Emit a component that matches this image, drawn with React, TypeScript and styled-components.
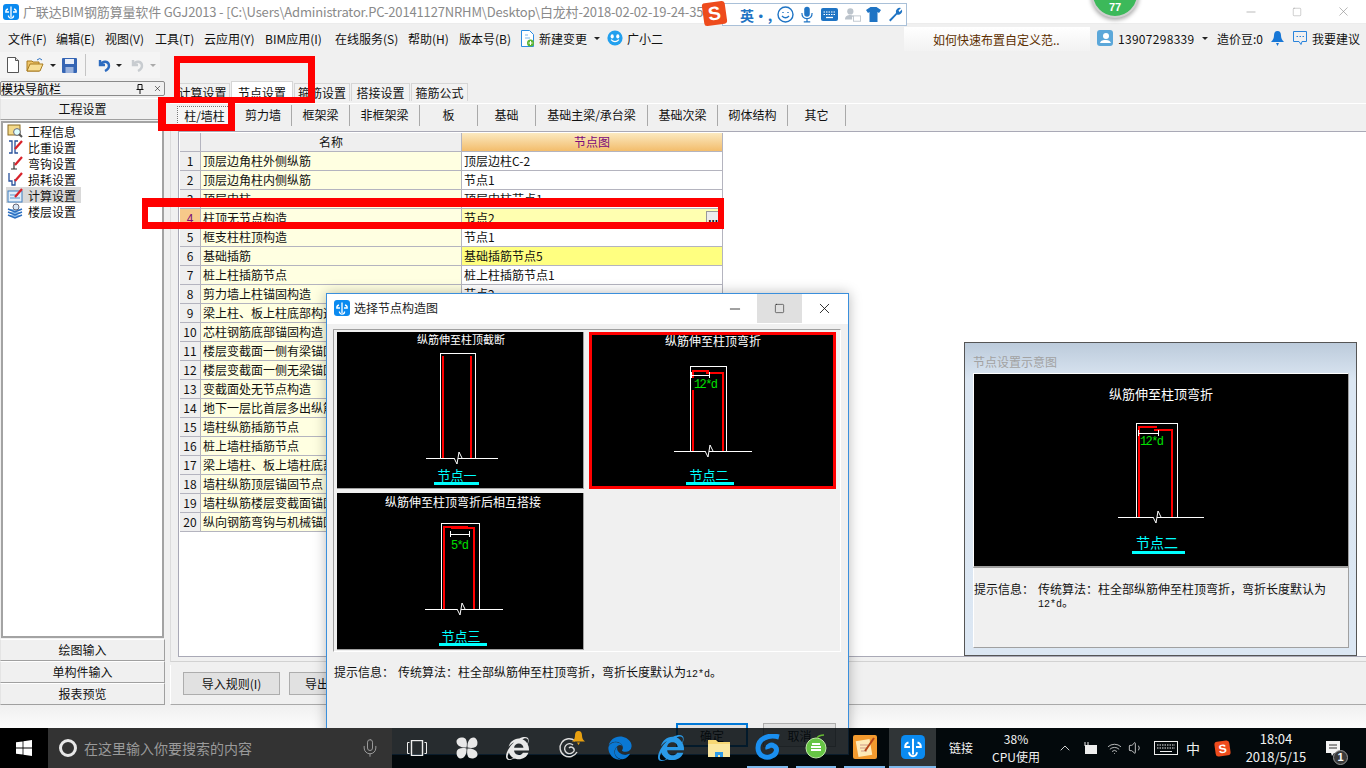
import React from "react";
import styled, { createGlobalStyle } from "styled-components";
import { FaEdge, FaInternetExplorer } from "react-icons/fa";
import { ChevronUp, Mic, Volume1, Wifi, X, Minus, Square } from "lucide-react";

const Global = createGlobalStyle`
  html, body { margin: 0; padding: 0; background: #000; }
  * { box-sizing: border-box; }
  body { font-family: "Noto Sans CJK SC", "Liberation Sans", sans-serif; font-size: 12px; color: #000; }
`;

const Desktop = styled.div`
  position: relative; width: 1366px; height: 768px; overflow: hidden;
  display: flex; flex-direction: column; background: #03090d;
`;
const AppWindow = styled.div`display: flex; flex-direction: column; height: 728px; background: #f0f0f0;`;

const TitleBar = styled.div`
  height: 23px; flex: none; background: #fff; display: flex; align-items: center; padding-left: 3px; gap: 4px;
`;
const TitleText = styled.span`font-size: 13px; color: #8a8a8a; white-space: nowrap; padding-bottom: 1px; letter-spacing: -0.16px;`;
const WinControls = styled.div`margin-left: auto; display: flex; color: #8c8c8c;`;
const WinButton = styled.span`width: 46px; height: 23px; display: flex; align-items: center; justify-content: center;`;

const MenuBar = styled.div`height: 29px; flex: none; display: flex; align-items: center; padding-left: 8px; border-top: 1px solid #ececec;`;
const MenuItem = styled.span<{ $w: number }>`width: ${p => p.$w}px; flex: none; white-space: nowrap; color: #111;`;
const MenuAction = styled.span`display: flex; align-items: center; gap: 4px; color: #111; white-space: nowrap;`;
const Caret = styled.i<{ $light?: boolean; $gap?: number }>`
  width: 0; height: 0; flex: none; margin: 0 ${p => p.$gap ?? 0}px;
  border-left: 3px solid transparent; border-right: 3px solid transparent;
  border-top: 3px solid ${p => (p.$light ? "#aaa" : "#222")};
`;
const NewsBox = styled.div`
  position: absolute; left: 904px; top: 27px; width: 186px; height: 24px; padding-left: 29px;
  display: flex; align-items: center; color: #5c2f00; background: linear-gradient(#fff, #f2f2f2);
`;
const UserArea = styled.div`
  margin-left: auto; padding-right: 6px; display: flex; align-items: center; color: #111; white-space: nowrap;
`;
const UserSlot = styled.span<{ $w: number; $wide?: boolean }>`
  width: ${p => p.$w}px; display: flex; align-items: center; flex: none;
  ${p => p.$wide && "letter-spacing: 0.3px;"}
`;

const ToolBar = styled.div`height: 29px; flex: none; display: flex; align-items: flex-start;`;
const ToolGroup = styled.div`
  height: 26px; width: 160px; padding-left: 3px; display: flex; align-items: center; background: #f4f4f4;
`;
const ToolSlot = styled.span<{ $w: number }>`width: ${p => p.$w}px; flex: none; display: flex; justify-content: center;`;
const ToolSep = styled.i`width: 1px; height: 22px; background: #c4c4c4; margin: 0 7px 0 6px; flex: none;`;

const Workspace = styled.div`height: 624px; flex: none; display: flex;`;
const Nav = styled.div`width: 165px; flex: none; margin-right: 5px; display: flex; flex-direction: column;`;
const NavHead = styled.div`
  height: 15px; flex: none; display: flex; align-items: center; border: 1px solid #8a8a8a; border-radius: 2px;
  line-height: 13px; white-space: nowrap;
`;
const NavHeadIcons = styled.span`margin-left: auto; display: flex; align-items: center; gap: 9px; padding-right: 2px;`;
const NavButton = styled.div<{ $h?: number }>`
  height: ${p => p.$h ?? 22}px; flex: none; display: flex; align-items: center; justify-content: center;
  background: #f0f0f0; border: 1px solid #a0a0a0; border-top-color: #fff; border-left-color: #e4e4e4;
  margin-top: ${p => (p.$h ? 2 : 0)}px; color: #111; padding-bottom: 2px;
`;
const Tree = styled.div`
  flex: 1; margin: 1px 1px 1px; background: #fff; border: 2px solid #a3a3a3; padding: 0 3px; display: flex; flex-direction: column;
`;
const TreeRow = styled.div<{ $on?: boolean }>`
  height: 16px; width: 75px; display: flex; align-items: center; gap: 4px; padding-left: 1px; white-space: nowrap;
  background: ${p => (p.$on ? "#d9d9d9" : "transparent")}; color: #111;
`;

const Right = styled.div`flex: 1; min-width: 0; display: flex; flex-direction: column;`;
const Tabs = styled.div`height: 20px; flex: none; display: flex; padding-left: 5px; gap: 1px; align-items: flex-end;`;
const Tab = styled.div<{ $w: number; $on?: boolean }>`
  width: ${p => p.$w}px; height: ${p => (p.$on ? 20 : 18)}px; display: flex; align-items: center; justify-content: center;
  background: ${p => (p.$on ? "#fff" : "#f2f2f2")}; border: 1px solid #d6d6d6; border-bottom: none; color: #111;
  padding-bottom: ${p => (p.$on ? 0 : 1)}px; padding-top: ${p => (p.$on ? 2 : 0)}px;
`;
const SubTabs = styled.div`
  height: 24px; flex: none; margin-top: 2px; padding-left: 7px; display: flex; align-items: center; border-top: 1px solid #fff;
`;
const SubTab = styled.div<{ $w: number; $on?: boolean }>`
  width: ${p => p.$w}px; height: 21px; flex: none; display: flex; align-items: center; justify-content: center; color: #111;
  border-right: 1px solid #a9a9a9; padding-bottom: 2px;
  ${p => p.$on && "border: 1px dotted #777; background: #f7f7f7; height: 19px; margin-right: 3px; padding-bottom: 0;"}
`;
const GridOuter = styled.div`
  margin-top: 4px; height: 531px; flex: none; padding-left: 7px; border-left: 1px solid #dcdcdc; border-bottom: 1px solid #d2d2d2;
`;
const GridFrame = styled.div`
  height: 526px; background: #fff; border: 1px solid #a9a9b6; border-right: none; padding: 1px;
`;
const Row = styled.div`display: grid; grid-template-columns: 21px 261px 261px; width: 543px; height: 19px;`;
const Cell = styled.div<{ $bg?: string; $center?: boolean; $color?: string }>`
  background: ${p => p.$bg ?? "#fff"}; color: ${p => p.$color ?? "#111"};
  border-right: 1px solid #b4b4bf; border-bottom: 1px solid #b4b4bf; padding: 0 0 2px ${p => (p.$center ? 0 : 2)}px;
  display: flex; align-items: center; white-space: nowrap; overflow: hidden; position: relative;
  ${p => p.$center && "justify-content: center;"}
`;
const DotButton = styled.span`
  position: absolute; right: 2px; top: 2px; width: 14px; height: 14px; background: #ececec; border: 1px solid #999;
  color: #000; font-size: 10px; font-weight: 700; display: flex; align-items: center; justify-content: center; line-height: 6px;
`;
const BottomBar = styled.div`
  height: 40px; flex: none; margin-top: 3px; padding: 7px 0 0 12px; display: flex; gap: 9px;
  border-left: 1px solid #fff; border-bottom: 1px solid #a9a9a9;
`;
const GrayButton = styled.div<{ $w: number; $start?: boolean }>`
  width: ${p => p.$w}px; height: 23px; display: flex; align-items: center; justify-content: ${p => (p.$start ? "flex-start" : "center")};
  padding: 0 0 1px ${p => (p.$start ? 15 : 0)}px;
  background: #e1e1e1; border: 1px solid #adadad; color: #111;
`;
const FootStrip = styled.div`flex: 1; background: linear-gradient(#f0f0f0, #fcfcfc);`;

const Ring = styled.div`
  position: absolute; left: 1091px; top: -30px; width: 48px; height: 48px; border-radius: 50%; z-index: 8;
  background: #3cb95a; border: 2px solid #cfcfcf; box-shadow: 0 2px 4px rgba(0,0,0,.35);
  display: flex; align-items: flex-end; justify-content: center; padding-bottom: 3px;
  color: #fff; font-family: "Liberation Sans", sans-serif; font-weight: 700; font-size: 11px;
`;
const Ime = styled.div`
  position: absolute; left: 722px; top: 3px; width: 185px; height: 23px; background: #fff; border: 1px solid #a9c0d8; z-index: 9;
  display: flex; align-items: center; padding-left: 14px; color: #1f74c4;
`;
const ImeSlot = styled.span<{ $w: number }>`width: ${p => p.$w}px; flex: none; display: flex; justify-content: center; font-weight: 700; font-size: 14px;`;
const SogouBadge = styled.div<{ $size: number }>`
  width: ${p => p.$size}px; height: ${p => p.$size}px; border-radius: 3px; background: #ee4b1c; transform: rotate(-8deg);
  display: flex; align-items: center; justify-content: center; color: #fff; flex: none;
  font: 700 ${p => Math.round(p.$size * 0.82)}px "Liberation Sans", sans-serif;
`;
const ImeLogo = styled.div`position: absolute; left: 703px; top: 2px; z-index: 10;`;

const Red = styled.div<{ $l: number; $t: number; $w: number; $h: number; $b: string }>`
  position: absolute; left: ${p => p.$l}px; top: ${p => p.$t}px; width: ${p => p.$w}px; height: ${p => p.$h}px;
  border: solid #ff0000; border-width: ${p => p.$b}; z-index: 3; pointer-events: none;
`;

const Dialog = styled.div`
  position: absolute; left: 326px; top: 293px; width: 523px; height: 462px; background: #f0f0f0; z-index: 5;
  border: 1px solid #3a8fdc; box-shadow: 0 0 12px rgba(0,0,0,.28); display: flex; flex-direction: column;
`;
const DialogTitle = styled.div`
  height: 30px; flex: none; background: #fff; display: flex; align-items: center; padding: 0 0 3px 7px; gap: 4px; color: #222;
`;
const DialogControls = styled.div`margin-left: auto; margin-right: 1px; display: flex; height: 29px; align-self: flex-start; color: #111;`;
const DialogBtn = styled.span<{ $hover?: boolean }>`
  width: 45px; display: flex; align-items: center; justify-content: center; background: ${p => (p.$hover ? "#e0e0e0" : "transparent")};
`;
const PickFrame = styled.div`
  margin: 5px 0 0 6px; width: 508px; height: 323px; flex: none; border: 1px solid #a0a0a0; border-right-color: #fff; border-bottom-color: #fff;
  padding: 2px 3px; display: grid; grid-template-columns: 247px 247px; grid-auto-rows: 157px; column-gap: 5px; row-gap: 4px;
`;
const Pick = styled.div<{ $on?: boolean }>`
  background: #000; border-right: 1px solid #a0a0a0; border-bottom: 1px solid #a0a0a0;
  ${p => p.$on && "outline: 3px solid #f00; outline-offset: -3px;"}
  svg { display: block; }
`;
const TipLine = styled.div`margin: 11px 0 0 7px; white-space: nowrap; color: #111; display: flex; gap: 4px;`;
const Mono = styled.span`font-family: "Liberation Mono", monospace; font-size: 10px; white-space: nowrap; display: inline-block;`;
const DialogFoot = styled.div`margin-top: auto; margin-bottom: 7px; padding-left: 349px; display: flex; gap: 15px;`;
const DialogButton = styled.div<{ $primary?: boolean }>`
  width: ${p => (p.$primary ? 72 : 73)}px; height: 24px; display: flex; align-items: center; justify-content: center; color: #111;
  background: #e1e1e1; border: ${p => (p.$primary ? "2px solid #0078d7" : "1px solid #adadad")};
`;

const Preview = styled.div`
  position: absolute; left: 964px; top: 342px; width: 393px; height: 314px; z-index: 4; border: 1px solid #555;
  background: linear-gradient(#bccbdb, #dbe6f2 12%, #dce7f3); padding: 0 7px 7px 8px; display: flex; flex-direction: column;
`;
const PreviewTitle = styled.div`height: 30px; flex: none; display: flex; align-items: center; padding-top: 6px; color: #a2a2a2;`;
const PreviewArt = styled.div`
  height: 195px; flex: none; background: #000; border: 1px solid #fff; border-right-color: #a0a0a0; border-bottom: 2px solid #a0a0a0; overflow: hidden;
  svg { display: block; margin: -1px; }
`;
const PreviewTip = styled.div`
  flex: 1; background: #f0f0f0; padding: 14px 0 0 0; border: 1px solid #fff; border-top: none; border-right-color: #a0a0a0; border-bottom-color: #a0a0a0;
  display: flex; gap: 4px; line-height: 13px; color: #111;
`;
const PreviewText = styled.div`width: 294px;`;

const Taskbar = styled.div`
  position: relative; z-index: 7; height: 40px; flex: none; display: flex; align-items: stretch; color: #fff;
  background: rgba(3, 9, 13, 0.85);
`;
const Start = styled.div`width: 48px; flex: none; background: #000; display: flex; align-items: center; justify-content: center;`;
const Search = styled.div`
  width: 344px; flex: none; background: #333; display: flex; align-items: center; padding-left: 11px; color: #9a9a9a; font-size: 14px; gap: 7px;
`;
const Cortana = styled.i`width: 18px; height: 18px; border-radius: 50%; border: 3px solid #e8e8e8; flex: none;`;
const SearchMic = styled.span`margin-left: auto; margin-right: 12px; display: flex;`;
const TaskIcons = styled.div`
  width: 544px; flex: none; display: grid; grid-template-columns: 49px 51px 51px 51px 52px 49px 48px 49px 48px 49px 47px;
`;
const TaskSlot = styled.div<{ $active?: boolean; $under?: boolean }>`
  position: relative; display: flex; align-items: center; justify-content: center;
  background: ${p => (p.$active ? "rgba(255,255,255,.18)" : "transparent")};
  ${p => p.$under && `border-bottom: 2px solid #7db8ec; margin: 0 ${p.$active ? 0 : 4}px;`}
`;
const TrayText = styled.div<{ $w: number; $fs?: number }>`
  width: ${p => p.$w}px; flex: none; display: flex; flex-direction: column; align-items: center; justify-content: center;
  color: #f2f2f2; font-size: ${p => p.$fs ?? 12}px; line-height: 18px; white-space: nowrap;
`;
const TraySlot = styled.div<{ $w: number }>`width: ${p => p.$w}px; flex: none; display: flex; align-items: center; justify-content: center; color: #eee; font-size: 14px;`;
const TrayGap = styled.i`width: 7px; flex: none;`;
const NotifyBadge = styled.span`
  position: absolute; right: -8px; bottom: -9px; width: 15px; height: 15px; border-radius: 50%; background: #3a3a3a; border: 1px solid #999;
  display: flex; align-items: center; justify-content: center; font: 700 11px "Liberation Sans", sans-serif; color: #fff;
`;
const NotifyWrap = styled.span`position: relative; display: flex;`;
const BellOver = styled.span`position: absolute; right: 9px; top: 3px; display: flex;`;

const Logo = ({ size = 16 }: { size?: number }) => (
  <svg width={size} height={size} viewBox="0 0 16 16">
    <rect width="16" height="16" rx="3" fill="#0a8af0" />
    <path d="M8 2.500v10.500M5 5a3 3 0 0 0-2.200 3H6M11 5a3 3 0 0 1 2.200 3H10M5.400 11.500A2.600 2.600 0 0 0 10.600 11.500" stroke="#fff" strokeWidth="1.300" fill="none" />
  </svg>
);
const Pencil = () => <path d="M8 10 15 2" stroke="#d8222a" strokeWidth="2.200" />;
const TreeIcon = ({ kind }: { kind: number }) => (
  <svg width="17" height="16" viewBox="0 0 17 16">
    {kind === 0 && (<g><rect x="1" y="2" width="12" height="10" fill="#f3d98a" stroke="#8a6a20" /><circle cx="10" cy="9" r="3.400" fill="#dff" stroke="#667" /><path d="m12 11 3 3" stroke="#555" strokeWidth="2" /></g>)}
    {kind === 1 && (<g><path d="M2 2h3v12H2M11 2H8v12h3" stroke="#27509b" strokeWidth="1.300" fill="none" /><Pencil /></g>)}
    {kind === 2 && (<g><path d="M7 7v7M4 14h6" stroke="#333" strokeWidth="1.200" /><Pencil /></g>)}
    {kind === 3 && (<g><path d="M2 2v8h3v4h3v-6" stroke="#27509b" strokeWidth="1.300" fill="none" /><Pencil /></g>)}
    {kind === 4 && (<g><rect x="1" y="4" width="14" height="11" fill="#e1eefa" stroke="#3f7fbf" /><path d="M3 8h8M3 11h10" stroke="#5d93c8" /><Pencil /></g>)}
    {kind === 5 && (<g><path d="M1 12 8 15l7-3M1 9l7 3 7-3M1 6l7 3 7-3" stroke="#2c6fc0" strokeWidth="1.400" fill="#8fc0ee" /><circle cx="9" cy="4" r="3" fill="#d9e8f6" stroke="#667" /></g>)}
  </svg>
);

interface Art {
  w: number; h: number; title: string; tx: number; ty: number; ts: number;
  rect: [number, number, number, number]; ground: [number, number]; red: string[]; rw: number;
  dim?: [number, number, number]; note?: [string, number, number]; brk: number;
  label: string; lx: number; ly: number; ls: number; bar: [number, number, number];
}
const NodeArt = ({ a }: { a: Art }) => {
  const gy = a.rect[3];
  return (
    <svg width={a.w} height={a.h} viewBox={`0 0 ${a.w} ${a.h}`}>
      <text x={a.tx} y={a.ty} fill="#fff" fontSize={a.ts} textAnchor="middle" fontFamily='"Noto Sans CJK SC", sans-serif'>{a.title}</text>
      <path d={`M${a.rect[0]} ${gy}V${a.rect[1]}H${a.rect[2]}V${gy}`} stroke="#fff" fill="none" shapeRendering="crispEdges" />
      {a.red.map((d, i) => <path key={i} d={d} stroke="#f00" strokeWidth={a.rw} fill="none" shapeRendering="crispEdges" />)}
      <path d={`M${a.ground[0]} ${gy}H${a.ground[1]}`} stroke="#fff" shapeRendering="crispEdges" />
      <path d={`M${a.brk - 4} ${gy}l3 6 2-12 3 6`} stroke="#fff" fill="#000" />
      {a.dim && <path d={`M${a.dim[0]} ${a.dim[2]}H${a.dim[1]}M${a.dim[0]} ${a.dim[2] - 3}v6M${a.dim[1]} ${a.dim[2] - 3}v6`} stroke="#fff" shapeRendering="crispEdges" />}
      {a.note && <text x={a.note[1]} y={a.note[2]} fill="#00e000" fontSize="12" fontFamily='"Liberation Mono", monospace' textLength={a.note[0].length * 6}>{a.note[0]}</text>}
      <text x={a.lx} y={a.ly} fill="#00ffff" fontSize={a.ls} textAnchor="middle" fontFamily='"Noto Sans CJK SC", sans-serif'>{a.label}</text>
      <rect x={a.bar[0]} y={a.bar[2]} width={a.bar[1] - a.bar[0]} height="3" fill="#00ffff" />
    </svg>
  );
};

const art1: Art = { w: 247, h: 157, title: "纵筋伸至柱顶截断", tx: 124, ty: 12, ts: 11, rect: [103, 21, 138, 126], ground: [89, 161], red: ["M106 24V126", "M134 24V126"], rw: 2, brk: 121, label: "节点一", lx: 120, ly: 148, ls: 13, bar: [97, 142, 150] };
const art2: Art = { w: 247, h: 157, title: "纵筋伸至柱顶弯折", tx: 124, ty: 14, ts: 12, rect: [101, 34, 137, 119], ground: [85, 163], red: ["M104 46V39H120", "M104 58V119", "M117 41H134V119"], rw: 2, dim: [102, 120, 43], note: ["12*d", 105, 56], brk: 120, label: "节点二", lx: 120, ly: 148, ls: 13, bar: [97, 145, 150] };
const art3: Art = { w: 247, h: 157, title: "纵筋伸至柱顶弯折后相互搭接", tx: 126, ty: 14, ts: 12, rect: [104, 30, 142, 116], ground: [88, 166], red: ["M107 116V34H131", "M114 35H137V116"], rw: 2, dim: [113, 132, 41], note: ["5*d", 114, 56], brk: 124, label: "节点三", lx: 124, ly: 148, ls: 13, bar: [102, 150, 150] };
const artBig: Art = { w: 375, h: 195, title: "纵筋伸至柱顶弯折", tx: 188, ty: 26, ts: 13, rect: [163, 50, 204, 144], ground: [145, 231], red: ["M166 144V54H184", "M181 57H199V144"], rw: 2, dim: [165, 185, 60], note: ["12*d", 167, 72], brk: 184, label: "节点二", lx: 184, ly: 175, ls: 14, bar: [159, 212, 178] };

const rows: [string, string][] = [
  ["顶层边角柱外侧纵筋", "顶层边柱C-2"], ["顶层边角柱内侧纵筋", "节点1"], ["顶层中柱", "顶层中柱节点1"],
  ["柱顶无节点构造", "节点2"], ["框支柱柱顶构造", "节点1"], ["基础插筋", "基础插筋节点5"], ["桩上柱插筋节点", "桩上柱插筋节点1"],
  ["剪力墙上柱锚固构造", "节点2"], ["梁上柱、板上柱底部构造", ""], ["芯柱钢筋底部锚固构造", ""],
  ["楼层变截面一侧有梁锚固构造", ""], ["楼层变截面一侧无梁锚固构造", ""], ["变截面处无节点构造", ""],
  ["地下一层比首层多出纵筋", ""], ["墙柱纵筋插筋节点", ""], ["桩上墙柱插筋节点", ""],
  ["梁上墙柱、板上墙柱底部构造", ""], ["墙柱纵筋顶层锚固节点", ""], ["墙柱纵筋楼层变截面锚固", ""], ["纵向钢筋弯钩与机械锚固", ""],
];
const menus: [string, number][] = [["文件(F)", 48], ["编辑(E)", 49], ["视图(V)", 50], ["工具(T)", 49], ["云应用(Y)", 61], ["BIM应用(I)", 70], ["在线服务(S)", 73], ["帮助(H)", 51], ["版本号(B)", 61]];
const tabs: [string, number, boolean?][] = [["计算设置", 55], ["节点设置", 62, true], ["箍筋设置", 56], ["搭接设置", 59], ["箍筋公式", 57]];
const subs: [string, number, boolean?][] = [["柱/墙柱", 55, true], ["剪力墙", 57], ["框架梁", 58], ["非框架梁", 70], ["板", 58], ["基础", 58], ["基础主梁/承台梁", 112], ["基础次梁", 70], ["砌体结构", 70], ["其它", 58]];
const tree = ["工程信息", "比重设置", "弯钩设置", "损耗设置", "计算设置", "楼层设置"];

const WinLogo = () => <svg width="16" height="16" viewBox="0 0 16 16" fill="#fff"><path d="M0 2.300 6.600 1.400v6.200H0zM7.400 1.300 16 0v7.600H7.400zM0 8.400h6.600v6.200L0 13.700zM7.400 8.400H16V16l-8.600-1.300z" /></svg>;
const FanIcon = () => (
  <svg width="24" height="24" viewBox="0 0 24 24" fill="#e8e8e8">
    {[0, 90, 180, 270].map(r => <path key={r} transform={`rotate(${r} 12 12)`} d="M11.500 11.500C6 12 1.500 9.500 1.500 5.500 1.500 1.500 9 0 11 3.500c1.200 2.500 1 5.500.5 8z" />)}
  </svg>
);
const FolderIcon = () => <svg width="24" height="22" viewBox="0 0 24 22"><path d="M1 3h8l2 2h12v15H1z" fill="#f7d774" /><rect x="1" y="7" width="22" height="13" fill="#fbe7a0" /><path d="M8 20v-5h8v5h-3v-2h-2v2z" fill="#2f9be8" /></svg>;
const SwirlIcon = () => <svg width="26" height="26" viewBox="0 0 26 26"><path d="M24 3C13 0 3 5 3 14c0 8 8 11 14 8 5-2 6-8 2-10-3-2-7 0-6 3" stroke="#1a8ff0" strokeWidth="5" fill="none" /></svg>;
const GreenE = () => <svg width="22" height="26" viewBox="0 0 22 26"><circle cx="11" cy="14" r="10" fill="#66c545" stroke="#bfe8a8" /><path d="M6 13h10M6 16h10M7 10h8" stroke="#fff" strokeWidth="2" /><path d="M12 4c2-3 5-3 7-3" stroke="#6b3" strokeWidth="1.400" fill="none" /></svg>;
const NoteIcon = () => <svg width="26" height="26" viewBox="0 0 26 26"><rect x="1" y="1" width="24" height="24" rx="2" fill="#f29a2e" /><rect x="5" y="6" width="14" height="16" fill="#fde9b8" transform="rotate(-10 12 14)" /><path d="M8 11h8M8 14h8M9 17h6" stroke="#c98" /><path d="M13 17 22 4" stroke="#b5461a" strokeWidth="2" /></svg>;
const SpiralIcon = () => <svg width="24" height="24" viewBox="0 0 24 24"><path d="M18 5A9 9 0 1 0 20 16M16 9a5 5 0 1 0 1 6 3 3 0 0 0-5-3" stroke="#ddd" strokeWidth="1.400" fill="none" /></svg>;
const BellGold = () => <svg width="13" height="14" viewBox="0 0 13 14" fill="#e8a010"><path d="M6.500 0C4 0 3 2 3 4.500S2 9 0 10.500h13C11 9 10 7 10 4.500S9 0 6.500 0zM5 11.500h3L6.500 14z" /></svg>;
const BlueBell = () => <svg width="13" height="15" viewBox="0 0 13 15" fill="#1877d6"><path d="M6.500 0C4 0 3 2 3 4.500S2 9 0 11h13C11 9 10 7 10 4.500S9 0 6.500 0zM5 12h3L6.500 15z" /></svg>;
const ChatIcon = () => <svg width="16" height="16" viewBox="0 0 16 16" fill="none" stroke="#2a84dc"><path d="M1.500 1.500h13v10H10l-1 3-2-3H1.500z" /><path d="M4.500 6.500h1.500M7.500 6.500H9M10.500 6.500H12" /></svg>;
const UserIcon = () => <svg width="16" height="16" viewBox="0 0 16 16"><rect width="16" height="16" rx="3" fill="#5ba7d9" /><circle cx="9" cy="6" r="3" fill="#fff" /><path d="M3 13c1-3 3-3 6-3s4 1 5 3z" fill="#fff" /></svg>;
const DocIcon = () => <svg width="15" height="17" viewBox="0 0 15 17"><path d="M1.500.5h8l4 4v12h-12z" fill="#fff" stroke="#2a8be0" /><path d="M5 8h5M5 5h3" stroke="#7ab6ea" /><circle cx="10.500" cy="13" r="3.500" fill="#5cb531" /><path d="M8.500 13h4M10.500 11v4" stroke="#fff" /></svg>;
const Smiley = () => <svg width="16" height="16" viewBox="0 0 20 20"><circle cx="10" cy="10" r="9.500" fill="#22a0ee" /><ellipse cx="6.500" cy="8" rx="2" ry="2.600" fill="#fff" /><ellipse cx="13.500" cy="8" rx="2" ry="2.600" fill="#fff" /><path d="M5 12q5 5 10 0" stroke="#fff" strokeWidth="1.500" fill="none" /></svg>;
const NewFile = () => <svg width="14" height="16" viewBox="0 0 14 16"><path d="M1.500.5h8l3 3v12h-11z" fill="#fff" stroke="#555" /><path d="M9.500.5v3h3" fill="#ddd" stroke="#555" /></svg>;
const OpenFile = () => <svg width="18" height="16" viewBox="0 0 18 16"><path d="M1 14V4h5l1 1h6v9z" fill="#eec468" stroke="#a87b1e" /><path d="M1 14 4 7h13l-3 7z" fill="#f8de94" stroke="#a87b1e" /><path d="M11 3q3-3 5 0" stroke="#2a6fc0" fill="none" /></svg>;
const Floppy = () => <svg width="15" height="15" viewBox="0 0 15 15"><rect width="15" height="15" rx="1" fill="#3565b4" /><rect x="3" y="1" width="9" height="5" fill="#e9eef8" /><rect x="3.500" y="9" width="8" height="6" fill="#9ab2dc" /></svg>;
const Undo = ({ gray }: { gray?: boolean }) => <svg width="15" height="14" viewBox="0 0 15 14" fill="none" stroke={gray ? "#c8ccd0" : "#2d6cc0"} strokeWidth="2.400"><path d="M4 2v5h5M4 7c3-5 9-4 9 1 0 2-2 4-4 5" /></svg>;
const ImeGlyph = ({ k }: { k: string }) => {
  if (k === "smile") return <svg width="17" height="17" viewBox="0 0 17 17" fill="none" stroke="#1f74c4" strokeWidth="1.400"><circle cx="8.500" cy="8.500" r="7.500" /><path d="M5 10q3.500 3.500 7 0M6 6v1M11 6v1" /></svg>;
  if (k === "mic") return <svg width="13" height="17" viewBox="0 0 13 17" fill="#1f74c4"><rect x="3.500" y="0" width="6" height="11" rx="3" /><path d="M1 7q0 6 5.500 6T12 7M6.500 13v3M3 16.500h7" stroke="#1f74c4" strokeWidth="1.300" fill="none" /></svg>;
  if (k === "kbd") return <svg width="17" height="13" viewBox="0 0 17 13"><rect width="17" height="13" rx="2" fill="#1f74c4" /><path d="M2.500 4h12M2.500 6.500h12" stroke="#fff" strokeDasharray="1.500 1" /><path d="M5 9.500h7" stroke="#fff" strokeWidth="1.300" /></svg>;
  if (k === "user") return <svg width="18" height="16" viewBox="0 0 18 16" fill="#bcc4cc"><circle cx="6" cy="4" r="3.500" /><path d="M0 13c0-4 3-5 6-5s4 1 4 2H8v3z" /><rect x="9.500" y="9" width="8" height="6" fill="#fff" stroke="#bcc4cc" /></svg>;
  if (k === "shirt") return <svg width="15" height="15" viewBox="0 0 15 15" fill="#1f74c4"><path d="M4.500 0h6l4.500 3-2 3-1.500-1v10H3.500V5L2 6 0 3z" /></svg>;
  return <svg width="15" height="15" viewBox="0 0 15 15" fill="#1f74c4"><path d="M1 13 8 6a4 4 0 0 1 5-5l-2.500 2.500L11.500 5 14 2.500a4 4 0 0 1-5 5L2.500 14.500z" /></svg>;
};
const Battery = () => <svg width="16" height="14" viewBox="0 0 16 14" fill="none" stroke="#eee"><rect x="3.500" y="4.500" width="11" height="8" fill="#eee" /><path d="M3 1v4M6 1v4" /></svg>;
const Kbd = () => <svg width="24" height="14" viewBox="0 0 24 14" fill="none" stroke="#eee"><rect x=".5" y=".5" width="23" height="13" /><path d="M3 4h18M3 7h18" strokeDasharray="1.500 1" /><path d="M6 10.500h12" /></svg>;
const Notify = () => <svg width="14" height="15" viewBox="0 0 14 15" fill="#f4f4f4"><path d="M0 0h14v12H8l-2 3-1-3H0z" /><path d="M3 4h8M3 7h8" stroke="#333" /></svg>;
const TaskView = () => <svg width="20" height="16" viewBox="0 0 20 16" fill="none" stroke="#eee"><rect x="4.500" y=".5" width="11" height="15" strokeWidth="1.400" /><path d="M2.500 2.500H.5v11h2M17.500 2.500h2v11h-2" /></svg>;

export default function App() {
  return (
    <Desktop>
      <Global />
      <AppWindow>
        <TitleBar>
          <Logo />
          <TitleText>广联达BIM钢筋算量软件 GGJ2013 - [C:\Users\Administrator.PC-20141127NRHM\Desktop\白龙村-2018-02-02-19-24-35</TitleText>
          <WinControls>
            <WinButton><Minus size={14} strokeWidth={1} /></WinButton>
            <WinButton><Square size={10} strokeWidth={1} /></WinButton>
            <WinButton><X size={15} strokeWidth={1} /></WinButton>
          </WinControls>
        </TitleBar>
        <MenuBar>
          {menus.map(([t, w]) => <MenuItem key={t} $w={w}>{t}</MenuItem>)}
          <MenuAction><DocIcon />新建变更</MenuAction>
          <Caret $gap={7} />
          <MenuAction><Smiley />广小二</MenuAction>
          <UserArea>
            <UserSlot $w={21}><UserIcon /></UserSlot>
            <UserSlot $w={84} $wide>13907298339</UserSlot>
            <UserSlot $w={15}><Caret /></UserSlot>
            <UserSlot $w={54}>造价豆:0</UserSlot>
            <UserSlot $w={21}><BlueBell /></UserSlot>
            <UserSlot $w={20}><ChatIcon /></UserSlot>
            <span>我要建议</span>
          </UserArea>
        </MenuBar>
        <ToolBar>
          <ToolGroup>
            <ToolSlot $w={20}><NewFile /></ToolSlot>
            <ToolSlot $w={24}><OpenFile /></ToolSlot>
            <ToolSlot $w={12}><Caret /></ToolSlot>
            <ToolSlot $w={20}><Floppy /></ToolSlot>
            <ToolSep />
            <ToolSlot $w={20}><Undo /></ToolSlot>
            <ToolSlot $w={12}><Caret /></ToolSlot>
            <ToolSlot $w={22}><Undo gray /></ToolSlot>
            <ToolSlot $w={12}><Caret $light /></ToolSlot>
          </ToolGroup>
        </ToolBar>
        <Workspace>
          <Nav>
            <NavHead>
              模块导航栏
              <NavHeadIcons>
                <svg width="8" height="10" viewBox="0 0 8 10" fill="none" stroke="#111"><path d="M2 .5h4v5H2zM.5 5.500h7M4 6v4" /></svg>
                <X size={9} strokeWidth={1.400} />
              </NavHeadIcons>
            </NavHead>
            <NavButton $h={22}>工程设置</NavButton>
            <Tree>
              {tree.map((t, i) => <TreeRow key={t} $on={i === 4}><TreeIcon kind={i} />{t}</TreeRow>)}
            </Tree>
            <NavButton>绘图输入</NavButton>
            <NavButton>单构件输入</NavButton>
            <NavButton>报表预览</NavButton>
          </Nav>
          <Right>
            <Tabs>{tabs.map(([t, w, on]) => <Tab key={t} $w={w} $on={on}>{t}</Tab>)}</Tabs>
            <SubTabs>{subs.map(([t, w, on]) => <SubTab key={t} $w={w} $on={on}>{t}</SubTab>)}</SubTabs>
            <GridOuter>
              <GridFrame>
                <Row>
                  <Cell $bg="#efefef" />
                  <Cell $bg="#efefef" $center>名称</Cell>
                  <Cell $bg="linear-gradient(#fbe9c0,#f3bd6c)" $center $color="#7a0a7a">节点图</Cell>
                </Row>
                {rows.map(([n, v], i) => (
                  <Row key={n}>
                    <Cell $center $bg={i === 3 ? "#f7c98a" : "#efefef"} $color={i === 3 ? "#7a0a7a" : "#111"}>{i + 1}</Cell>
                    <Cell $bg="#ffffe1">{n}</Cell>
                    <Cell $bg={i === 3 ? "#ffffb0" : i === 5 ? "#ffff80" : "#fff"}>
                      {v}
                      {i === 3 && <DotButton>...</DotButton>}
                    </Cell>
                  </Row>
                ))}
              </GridFrame>
            </GridOuter>
            <BottomBar>
              <GrayButton $w={97}>导入规则(I)</GrayButton>
              <GrayButton $w={97} $start>导出</GrayButton>
            </BottomBar>
          </Right>
        </Workspace>
        <FootStrip />
      </AppWindow>

      <Ring>77</Ring>
      <NewsBox>如何快速布置自定义范..</NewsBox>
      <ImeLogo><SogouBadge $size={23}>S</SogouBadge></ImeLogo>
      <Ime>
        <ImeSlot $w={20}>英</ImeSlot>
        <ImeSlot $w={12}>•,</ImeSlot>
        <ImeSlot $w={32}><ImeGlyph k="smile" /></ImeSlot>
        <ImeSlot $w={12}><ImeGlyph k="mic" /></ImeSlot>
        <ImeSlot $w={32}><ImeGlyph k="kbd" /></ImeSlot>
        <ImeSlot $w={16}><ImeGlyph k="user" /></ImeSlot>
        <ImeSlot $w={24}><ImeGlyph k="shirt" /></ImeSlot>
        <ImeSlot $w={20}><ImeGlyph k="tool" /></ImeSlot>
      </Ime>

      <Red $l={174} $t={56} $w={141} $h={47} $b="7px 7px 6px 6px" />
      <Red $l={158} $t={97} $w={77} $h={34} $b="6px 7px 7px 8px" />
      <Red $l={142} $t={198} $w={582} $h={31} $b="9px 6px 7px 6px" />

      <Preview>
        <PreviewTitle>节点设置示意图</PreviewTitle>
        <PreviewArt><NodeArt a={artBig} /></PreviewArt>
        <PreviewTip>
          <span>提示信息：</span>
          <PreviewText>传统算法：柱全部纵筋伸至柱顶弯折，弯折长度默认为 <Mono>12*d</Mono>。</PreviewText>
        </PreviewTip>
      </Preview>

      <Dialog>
        <DialogTitle>
          <Logo />
          选择节点构造图
          <DialogControls>
            <DialogBtn><Minus size={16} strokeWidth={1.200} /></DialogBtn>
            <DialogBtn $hover><Square size={11} strokeWidth={1.200} /></DialogBtn>
            <DialogBtn><X size={17} strokeWidth={1.200} /></DialogBtn>
          </DialogControls>
        </DialogTitle>
        <PickFrame>
          <Pick><NodeArt a={art1} /></Pick>
          <Pick $on><NodeArt a={art2} /></Pick>
          <Pick><NodeArt a={art3} /></Pick>
        </PickFrame>
        <TipLine>
          <span>提示信息：</span>
          <span>传统算法：柱全部纵筋伸至柱顶弯折，弯折长度默认为<Mono>12*d</Mono>。</span>
        </TipLine>
        <DialogFoot>
          <DialogButton $primary>确定</DialogButton>
          <DialogButton>取消</DialogButton>
        </DialogFoot>
      </Dialog>

      <Taskbar>
        <Start><WinLogo /></Start>
        <Search>
          <Cortana />
          在这里输入你要搜索的内容
          <SearchMic><Mic size={20} strokeWidth={1.200} color="#9a9a9a" /></SearchMic>
        </Search>
        <TaskIcons>
          <TaskSlot><TaskView /></TaskSlot>
          <TaskSlot><FanIcon /></TaskSlot>
          <TaskSlot><FaInternetExplorer size={23} color="#e8e8e8" /></TaskSlot>
          <TaskSlot><SpiralIcon /><BellOver><BellGold /></BellOver></TaskSlot>
          <TaskSlot><FaEdge size={24} color="#0a78d4" /></TaskSlot>
          <TaskSlot><FaInternetExplorer size={26} color="#2a9ae8" /></TaskSlot>
          <TaskSlot><FolderIcon /></TaskSlot>
          <TaskSlot $under><SwirlIcon /></TaskSlot>
          <TaskSlot $under><GreenE /></TaskSlot>
          <TaskSlot $under><NoteIcon /></TaskSlot>
          <TaskSlot $active $under><Logo size={24} /></TaskSlot>
        </TaskIcons>
        <TrayText $w={50}>链接</TrayText>
        <TrayText $w={60}><span>38%</span><span>CPU使用</span></TrayText>
        <TrayGap />
        <TraySlot $w={24}><ChevronUp size={16} strokeWidth={1.300} /></TraySlot>
        <TraySlot $w={25}><Battery /></TraySlot>
        <TraySlot $w={25}><Wifi size={15} strokeWidth={1.200} /></TraySlot>
        <TraySlot $w={18}><Volume1 size={16} strokeWidth={1.200} /></TraySlot>
        <TraySlot $w={42}><Kbd /></TraySlot>
        <TraySlot $w={12}>中</TraySlot>
        <TraySlot $w={46}><SogouBadge $size={15}>S</SogouBadge></TraySlot>
        <TrayText $w={62} $fs={13}><span>18:04</span><span>2018/5/15</span></TrayText>
        <TraySlot $w={52}><NotifyWrap><Notify /><NotifyBadge>1</NotifyBadge></NotifyWrap></TraySlot>
      </Taskbar>
    </Desktop>
  );
}
